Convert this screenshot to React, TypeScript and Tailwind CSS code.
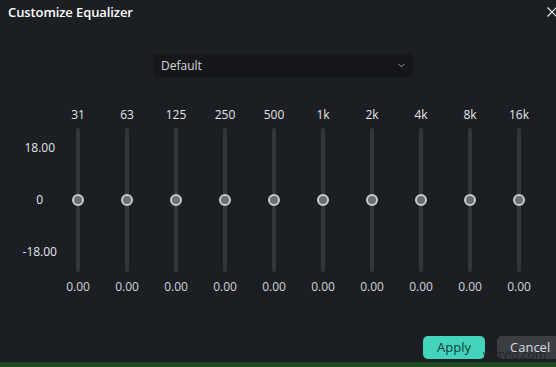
import { ChevronDown } from 'lucide-react';

const bands = ['31', '63', '125', '250', '500', '1k', '2k', '4k', '8k', '16k'];

function Band({ label }: { label: string }) {
    return (
        <div className="w-[49px] flex flex-col items-center">
            <div className="h-[20px] leading-[20px] text-[12px] text-[#e4e6e8]">{label}</div>
            <div className="relative h-[144px] w-[4px] mt-[3px] bg-[#33363b] rounded-sm">
                <div className="absolute left-1/2 top-[66px] -translate-x-1/2 w-[12px] h-[12px] rounded-full border-2 border-[#c9cacd] bg-[#6b6e73]" />
            </div>
            <div className="h-[20px] mt-[5px] leading-[20px] text-[12px] text-[#d2d4d7]">0.00</div>
        </div>
    );
}

export default function App() {
    return (
        <div
            className="relative w-[556px] h-[367px] overflow-hidden bg-[#1b1e22] flex flex-col"
            style={{ fontFamily: '"Open Sans", "Noto Sans", sans-serif' }}
        >
            {/* header */}
            <div className="flex items-center h-[24px] pl-[8px] pt-[1px]">
                <span className="text-[13px] font-semibold text-white tracking-[-0.1px]">Customize Equalizer</span>
            </div>
            <svg className="absolute left-[547px] top-[7px]" width="10" height="10" viewBox="0 0 10 10">
                <path d="M0.5 0.5 L9.5 9.5 M9.5 0.5 L0.5 9.5" stroke="#e8e8e8" strokeWidth="1.2" />
            </svg>

            {/* preset dropdown */}
            <div className="mt-[30px] ml-[153px] w-[260px] h-[23px] bg-[#15171a] rounded-sm flex items-center justify-between pl-[8px] pr-[6px]">
                <span className="text-[12px] text-[#d6d8db]">Default</span>
                <ChevronDown size={11} strokeWidth={1.6} className="text-[#c8cacd]" />
            </div>

            {/* equalizer */}
            <div className="flex mt-[28px]">
                <div className="w-[53.5px] flex flex-col items-center pl-[26px] text-[12px] text-[#e4e6e8]">
                    <div className="h-[23px]" />
                    <div className="h-[144px] flex flex-col justify-between items-center py-[11px] whitespace-nowrap">
                        <span className="leading-[18px]">18.00</span>
                        <span className="leading-[18px]">0</span>
                        <span className="leading-[18px]">-18.00</span>
                    </div>
                </div>
                {bands.map((b) => (
                    <Band key={b} label={b} />
                ))}
            </div>

            {/* footer buttons */}
            <div className="mt-auto mb-[3px] flex justify-end gap-[12px]">
                <button className="w-[62px] h-[23px] rounded-[5px] bg-[#44d4bb] text-[13px] text-[#0f3b34]">Apply</button>
                <button className="w-[59px] h-[23px] rounded-l-[5px] bg-[#3a3d42] text-[13px] text-[#dcdde0] text-left pl-[13px]">Cancel</button>
            </div>
            <div className="h-[5px] bg-[#1f4a1d]" />

            <span className="absolute left-[483px] top-[349px] text-[12px] leading-[12px] text-[#232527]">wvtvid.com</span>
        </div>
    );
}
